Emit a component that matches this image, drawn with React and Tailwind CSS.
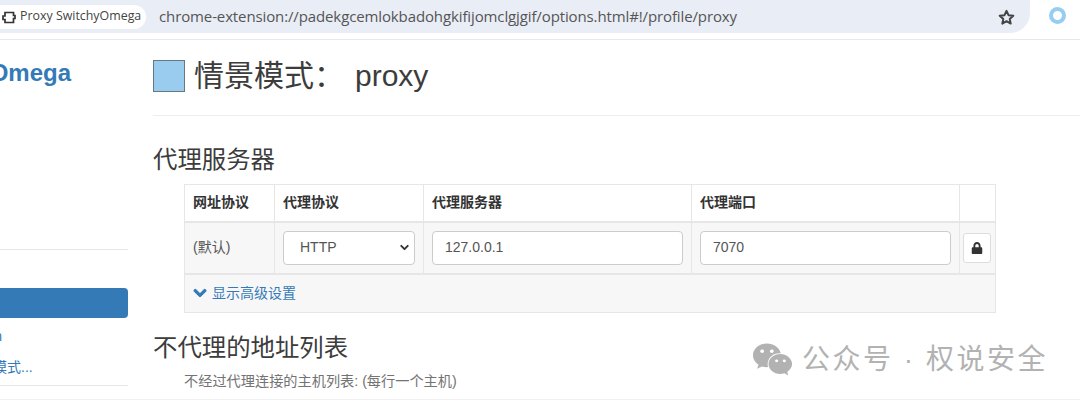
import React from 'react';
import { FaLock, FaChevronDown, FaWeixin } from 'react-icons/fa';
import { FiChevronDown } from 'react-icons/fi';

const cjk = "font-['Liberation_Sans','Noto_Sans_CJK_SC',sans-serif]";

function PuzzleIcon() {
  return (
    <svg width="14" height="14" viewBox="0 0 14 14" fill="none" stroke="#333" strokeWidth="1.7">
      <path d="M3 2.500h8.500v3h1.500v3h-1.500v4h-8.500v-3h-2v-3.500h2z" />
    </svg>
  );
}

function StarIcon() {
  return (
    <svg width="17" height="16" viewBox="0 0 17 16" fill="none" stroke="#444" strokeWidth="2" strokeLinejoin="round" className="ml-auto mr-[15px]">
      <path d="M8.500 1.800l2 4.400 4.800.5-3.600 3.200 1 4.700-4.200-2.400-4.200 2.400 1-4.700-3.600-3.200 4.800-.5z" />
    </svg>
  );
}

function Browser() {
  return (
    <div className="flex h-[40px] shrink-0 border-b border-[#e8e8ea] bg-white">
      <div className="flex h-[33px] w-[1030px] items-center rounded-br-[20px] bg-[#e9edf6]">
        <div className="flex h-[24px] w-[146px] items-center gap-[4px] rounded-r-full bg-white pl-[2px] text-[#444]">
          <PuzzleIcon />
          <span className="font-['Open_Sans',sans-serif] text-[12.400px] whitespace-nowrap">Proxy SwitchyOmega</span>
        </div>
        <span className="ml-[13px] font-['Open_Sans',sans-serif] text-[15px] tracking-[-0.120px] whitespace-nowrap text-[#555]">
          chrome-extension://padekgcemlokbadohgkifijomclgjgif/options.html#!/profile/proxy
        </span>
        <StarIcon />
      </div>
      <div className="ml-[19px] mt-[7px] h-[17px] w-[17px] rounded-full border-[4px] border-[#96cdf2]" />
    </div>
  );
}

function Sidebar() {
  return (
    <aside className={`flex w-[128px] shrink-0 flex-col overflow-hidden ${cjk}`}>
      <div className="mt-[18px] ml-[-101px] whitespace-nowrap text-[24px] leading-[30px] font-bold text-[#337ab7]">
        SwitchyOmega
      </div>
      <div className="mt-[161px] border-t border-[#e6e6e6]" />
      <div className="mt-[38px] h-[30px] rounded-r-[4px] bg-[#337ab7]" />
      <div className="mt-[8px] ml-[-68px] whitespace-nowrap text-[14px] leading-[20px] text-[#337ab7]">auto switch</div>
      <div className="mt-[11px] ml-[-63px] whitespace-nowrap text-[14px] leading-[20px] text-[#337ab7]">新建情景模式...</div>
      <div className="mt-[8px] border-t border-[#e6e6e6]" />
    </aside>
  );
}

function ProxyTable() {
  const th = 'h-[37px] border border-[#e6e6e6] border-b-2 pl-[8px] text-left text-[14px] font-bold text-[#333]';
  const td = 'h-[52px] border border-[#e6e6e6] border-b-2';
  const field = 'flex h-[34px] items-center rounded-[4px] border border-[#ccc] bg-white pl-[12px] text-[14px] text-[#555]';
  return (
    <table className="ml-[31px] w-[811px] table-fixed border-collapse">
      <colgroup>
        <col className="w-[90px]" />
        <col className="w-[149px]" />
        <col className="w-[268px]" />
        <col className="w-[268px]" />
        <col className="w-[36px]" />
      </colgroup>
      <thead>
        <tr>
          <th className={th}>网址协议</th>
          <th className={th}>代理协议</th>
          <th className={th}>代理服务器</th>
          <th className={th}>代理端口</th>
          <th className={th}></th>
        </tr>
      </thead>
      <tbody>
        <tr className="bg-[#f7f7f7]">
          <td className={`${td} pl-[8px] text-[14px] text-[#555]`}>(默认)</td>
          <td className={`${td} px-[8px]`}>
            <div className={`${field} justify-between !pl-[16px] pr-[3px]`}>
              HTTP
              <FiChevronDown className="text-[13px] text-[#333]" strokeWidth={3.500} />
            </div>
          </td>
          <td className={`${td} px-[8px]`}><div className={field}>127.0.0.1</div></td>
          <td className={`${td} px-[8px]`}><div className={field}>7070</div></td>
          <td className={`${td} pl-[3px]`}>
            <div className="flex h-[30px] w-[28px] items-center justify-center rounded-[3px] border border-[#ddd] bg-white">
              <FaLock className="text-[12px] text-[#333]" />
            </div>
          </td>
        </tr>
        <tr className="bg-[#f7f7f7]">
          <td colSpan={5} className="h-[39px] border border-[#e6e6e6] pl-[8px]">
            <div className="flex items-center gap-[5px] text-[14px] text-[#337ab7]">
              <FaChevronDown className="text-[14px]" stroke="currentColor" strokeWidth={40} />
              显示高级设置
            </div>
          </td>
        </tr>
      </tbody>
    </table>
  );
}

function Main() {
  return (
    <main className={`ml-[25px] flex-1 text-[#333] ${cjk}`}>
      <div className="mt-[20px] flex h-[32px] items-center gap-[9px]">
        <div className="h-[32px] w-[32px] border border-[#6b7780] bg-[#99ccee]" />
        <h1 className="text-[30px] leading-[36px] font-normal text-[#3c3c3c]">
          情景模式：<span className="ml-[11px]">proxy</span>
        </h1>
      </div>
      <div className="mt-[23px] border-t border-[#eee]" />
      <h3 className="mt-[29px] text-[24.400px] leading-[30px] text-[#3c3c3c]">代理服务器</h3>
      <div className="mt-[9px]">
        <ProxyTable />
      </div>
      <h3 className="mt-[20px] text-[24.400px] leading-[30px] text-[#3c3c3c]">不代理的地址列表</h3>
      <p className="ml-[31px] mt-[8px] text-[14.200px] leading-[20px] text-[#737373]">不经过代理连接的主机列表: (每行一个主机)</p>
    </main>
  );
}

export default function App() {
  return (
    <div className="relative flex h-[400px] w-[1080px] flex-col overflow-hidden bg-white">
      <Browser />
      <div className="flex flex-1">
        <Sidebar />
        <Main />
      </div>
      <div className="border-b border-[#f0f0f0]" />
      <div className={`absolute left-[752px] top-[339px] flex items-center gap-[9px] text-[28px] leading-[34px] tracking-[2.500px] whitespace-nowrap text-[#b2b2b2] ${cjk}`}>
        <FaWeixin className="text-[41px] text-[#b2b2b2]" />
        公众号 · 权说安全
      </div>
    </div>
  );
}
